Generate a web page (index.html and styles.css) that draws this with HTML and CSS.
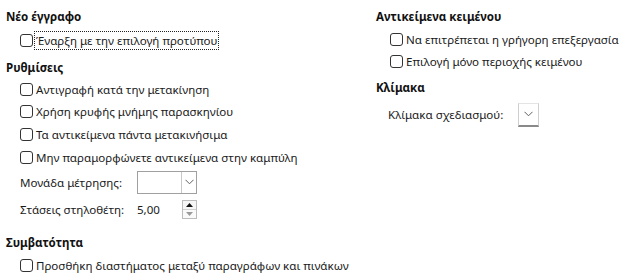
FILE: index.html
```html
<!DOCTYPE html>
<html>
<head>
<meta charset="utf-8">
<link rel="stylesheet" href="styles.css">
</head>
<body>
<div class="page">
  <div class="col left">
    <div class="heading h1">Νέο έγγραφο</div>
    <div class="row"><span class="cb"></span><span class="lbl focus">Έναρξη με την επιλογή προτύπου</span></div>
    <div class="heading h2">Ρυθμίσεις</div>
    <div class="row r2"><span class="cb"></span><span class="lbl">Αντιγραφή κατά την μετακίνηση</span></div>
    <div class="row r2"><span class="cb"></span><span class="lbl">Χρήση κρυφής μνήμης παρασκηνίου</span></div>
    <div class="row r2"><span class="cb"></span><span class="lbl">Τα αντικείμενα πάντα μετακινήσιμα</span></div>
    <div class="row r2"><span class="cb"></span><span class="lbl">Μην παραμορφώνετε αντικείμενα στην καμπύλη</span></div>
    <div class="field combo-row">
      <span class="flabel">Μονάδα μέτρησης:</span>
      <span class="combo"><span class="combo-text"></span><span class="combo-btn"><svg width="9" height="6" viewBox="0 0 9 6"><path d="M0.5 0.8 L4.5 4.8 L8.5 0.8" fill="none" stroke="#606060" stroke-width="1"/></svg></span></span>
    </div>
    <div class="field spin-row">
      <span class="flabel">Στάσεις στηλοθέτη:</span>
      <span class="spin"><span class="spin-text">5,00</span><span class="spin-btns"><span class="up"><svg width="7" height="4" viewBox="0 0 7 4"><path d="M0 4 L3.5 0 L7 4 Z" fill="#111"/></svg></span><span class="down"><svg width="7" height="4" viewBox="0 0 7 4"><path d="M0 0 L3.5 4 L7 0 Z" fill="#9a9a9a"/></svg></span></span></span>
    </div>
    <div class="heading h3">Συμβατότητα</div>
    <div class="row"><span class="cb"></span><span class="lbl">Προσθήκη διαστήματος μεταξύ παραγράφων και πινάκων</span></div>
  </div>
  <div class="col right">
    <div class="heading h1">Αντικείμενα κειμένου</div>
    <div class="row rr"><span class="cb"></span><span class="lbl">Να επιτρέπεται η γρήγορη επεξεργασία</span></div>
    <div class="row rr"><span class="cb"></span><span class="lbl">Επιλογή μόνο περιοχής κειμένου</span></div>
    <div class="heading h4">Κλίμακα</div>
    <div class="field scale-row">
      <span class="flabel wide">Κλίμακα σχεδιασμού:</span>
      <span class="mini-combo"><svg width="9" height="6" viewBox="0 0 9 6"><path d="M0.5 0.8 L4.5 4.8 L8.5 0.8" fill="none" stroke="#606060" stroke-width="1"/></svg></span>
    </div>
  </div>
</div>
</body>
</html>
```
FILE: styles.css
```css
html, body {
  margin: 0;
  padding: 0;
  background: #ffffff;
}
body {
  font-family: "Noto Sans", "Open Sans", sans-serif;
  font-size: 11.55px;
  color: #1a1a1a;
}
.page {
  display: grid;
  grid-template-columns: 370px 1fr;
  padding-left: 6px;
  padding-top: 6px;
  width: 628px;
  height: 280px;
  box-sizing: border-box;
}
.col {
  display: flex;
  flex-direction: column;
}
.heading {
  font-weight: bold;
  height: 22px;
  line-height: 22px;
  color: #111;
}
.h2 { margin-top: 6px; height: 21px; line-height: 21px; }
.h3 { margin-top: 11px; }
.h4 { margin-top: 5px; }
.row {
  display: flex;
  align-items: center;
  height: 22px;
  padding-left: 14px;
  margin-top: 1px;
}
.r2 { height: 22.67px; margin-top: 0; }
.rr { height: 21px; margin-top: 1px; }
.cb {
  width: 11px;
  height: 11px;
  border: 1px solid #333;
  border-radius: 3px;
  margin-right: 1px;
  flex: none;
  background: #fff;
}
.lbl {
  white-space: nowrap;
  padding: 1px 1px 1px 1px;
  border: 1px solid transparent;
}
.focus {
  border: 1px dotted #222;
}
.field {
  display: flex;
  align-items: center;
  padding-left: 14px;
}
.flabel {
  width: 117px;
  white-space: nowrap;
}
.flabel.wide { width: 130px; }
.combo-row { height: 23px; margin-top: 2px; }
.combo {
  display: flex;
  width: 58px;
  height: 21px;
  border: 1px solid #a0a0a0;
  background: #fff;
}
.combo-text { flex: 1; }
.combo-btn {
  width: 14px;
  border-left: 1px solid #c8c8c8;
  display: flex;
  align-items: center;
  justify-content: center;
}
.spin-row { height: 23px; margin-top: 4px; }
.spin {
  display: flex;
  align-items: center;
  width: 60px;
  height: 19px;
}
.spin-text { flex: 1; }
.spin-btns {
  width: 13px;
  height: 17px;
  border: 1px solid #bcbcbc;
  display: flex;
  flex-direction: column;
}
.up, .down {
  flex: 1;
  display: flex;
  align-items: center;
  justify-content: center;
}
.up { background: #f6f6f6; border-bottom: 1px solid #d0d0d0; }
.down { background: #fafafa; }
.scale-row { height: 23px; margin-top: 4px; padding-left: 12px; }
.mini-combo {
  width: 19px;
  height: 21px;
  border-left: 1px solid #cfcfcf;
  border-right: 1px solid #cfcfcf;
  border-top: 1px solid #e4e4e4;
  border-bottom: 2px solid #8a8a8a;
  display: flex;
  align-items: center;
  justify-content: center;
  box-sizing: content-box;
}
```
